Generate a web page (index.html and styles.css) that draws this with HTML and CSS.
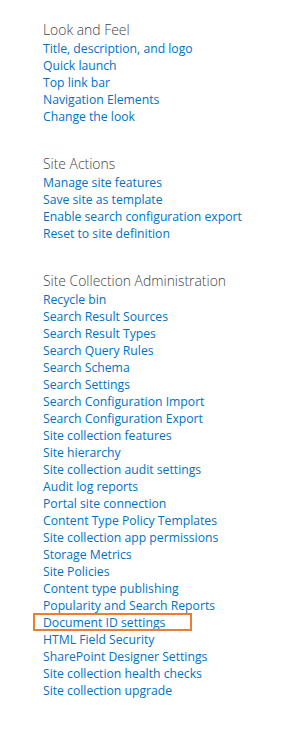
FILE: index.html
```html
<!DOCTYPE html>
<html lang="en">
<head>
    <meta charset="UTF-8">
    <meta name="viewport" content="width=device-width, initial-scale=1.0">
    <title>Site Settings</title>
    <link rel="stylesheet" href="styles.css">
</head>
<body>
    <div class="settings">
        <div class="group">
            <h2>Look and Feel</h2>
            <ul>
                <li><a href="#">Title, description, and logo</a></li>
                <li><a href="#">Quick launch</a></li>
                <li><a href="#">Top link bar</a></li>
                <li><a href="#">Navigation Elements</a></li>
                <li><a href="#">Change the look</a></li>
            </ul>
        </div>

        <div class="group">
            <h2>Site Actions</h2>
            <ul>
                <li><a href="#">Manage site features</a></li>
                <li><a href="#">Save site as template</a></li>
                <li><a href="#">Enable search configuration export</a></li>
                <li><a href="#">Reset to site definition</a></li>
            </ul>
        </div>

        <div class="group">
            <h2>Site Collection Administration</h2>
            <ul>
                <li><a href="#">Recycle bin</a></li>
                <li><a href="#">Search Result Sources</a></li>
                <li><a href="#">Search Result Types</a></li>
                <li><a href="#">Search Query Rules</a></li>
                <li><a href="#">Search Schema</a></li>
                <li><a href="#">Search Settings</a></li>
                <li><a href="#">Search Configuration Import</a></li>
                <li><a href="#">Search Configuration Export</a></li>
                <li><a href="#">Site collection features</a></li>
                <li><a href="#">Site hierarchy</a></li>
                <li><a href="#">Site collection audit settings</a></li>
                <li><a href="#">Audit log reports</a></li>
                <li><a href="#">Portal site connection</a></li>
                <li><a href="#">Content Type Policy Templates</a></li>
                <li><a href="#">Site collection app permissions</a></li>
                <li><a href="#">Storage Metrics</a></li>
                <li><a href="#">Site Policies</a></li>
                <li><a href="#">Content type publishing</a></li>
                <li><a href="#">Popularity and Search Reports</a></li>
                <!-- highlighted entry -->
                <li class="marked"><a href="#">Document ID settings</a></li>
                <li><a href="#">HTML Field Security</a></li>
                <li><a href="#">SharePoint Designer Settings</a></li>
                <li><a href="#">Site collection health checks</a></li>
                <li><a href="#">Site collection upgrade</a></li>
            </ul>
        </div>
    </div>
</body>
</html>
```

FILE: styles.css
```css
body {
    margin: 0;
    background: #fff;
    font-family: "Open Sans", Arial, sans-serif;
}
.settings {
    padding: 21px 0 0 43px;
}
.group {
    margin-bottom: 31px;
}
.group h2 {
    margin: 0;
    font-size: 13.9px;
    font-weight: 300;
    color: #444;
    line-height: 18px;
}
.group ul {
    list-style: none;
    margin: 0;
    padding: 0;
}
.group li {
    line-height: 17px;
    height: 17px;
}
.group a {
    font-size: 12.2px;
    color: #0072c6;
    text-decoration: none;
    white-space: nowrap;
}
.marked {
    position: relative;
}
.marked::before {
    content: "";
    position: absolute;
    left: -10px;
    top: 0;
    width: 155px;
    height: 14px;
    border: 2px solid #ed7d31;
}
```
